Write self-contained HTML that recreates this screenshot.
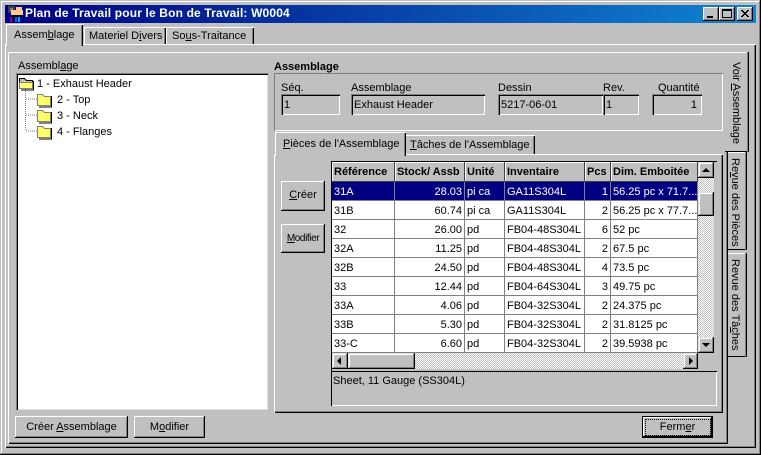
<!DOCTYPE html>
<html lang="fr"><head><meta charset="utf-8"><title>Plan de Travail</title>
<style>
html,body{margin:0;padding:0;background:#c0c0c0}
#w{position:relative;width:761px;height:455px;overflow:hidden;background:#c0c0c0;font:11px/13px "Liberation Sans",sans-serif;color:#000}
#w div{position:absolute;box-sizing:border-box;white-space:nowrap}
.btn{background:#c0c0c0;box-shadow:inset -1px -1px #000,inset 1px 1px #fff,inset -2px -2px #808080;text-align:center}
.sb{background:#c0c0c0;box-shadow:inset -1px -1px #000,inset 1px 1px #dfdfdf,inset -2px -2px #808080,inset 2px 2px #fff}
.f{background:#c0c0c0;box-shadow:inset 1px 1px #808080,inset 2px 2px #000,inset -1px -1px #fff;padding:4px 0 0 3px;height:21px;line-height:14px}
.chk{background:repeating-conic-gradient(#fff 0 25%,#c0c0c0 0 50%) 0 0/2px 2px}
.rot{transform:rotate(90deg);transform-origin:0 0}
table{position:absolute;left:332px;top:162px;border-collapse:separate;border-spacing:0;table-layout:fixed;width:366px}
td,th{box-sizing:border-box;height:19px;padding:4px 0 0 2px;vertical-align:top;border-right:1px solid #808080;border-bottom:1px solid #808080;background:#fff;font-size:11px;line-height:13px;overflow:hidden;white-space:nowrap;text-align:left;font-weight:normal}
th{height:20px;background:#c0c0c0;font-weight:bold;border:0;box-shadow:inset -1px -1px #404040,inset 1px 1px #fff}
td.r{text-align:right;padding:4px 2px 0 0}
tr.s td{background:#000080;color:#fff}
</style></head><body>
<div id="w">
<!-- window frame -->
<div style="left:0;top:0;width:761px;height:455px;box-shadow:inset -1px -1px #000,inset 1px 1px #c0c0c0,inset -2px -2px #808080,inset 2px 2px #fff"></div>
<!-- title bar -->
<div style="left:5px;top:5px;width:751px;height:18px;background:linear-gradient(90deg,#000080,#1084d0)"></div>
<svg style="position:absolute;left:7px;top:5px" width="17" height="18" viewBox="0 0 17 18" shape-rendering="crispEdges">
<rect x="1" y="1" width="7" height="7" fill="#404040"/><rect x="3" y="3" width="3" height="3" fill="#808080"/>
<rect x="4" y="5" width="12" height="6" fill="#ffc890"/><rect x="9" y="2" width="6" height="4" fill="#ffc890"/>
<rect x="4" y="10" width="12" height="2" fill="#000"/>
<rect x="3" y="12" width="2" height="5" fill="#8000c0"/><rect x="6" y="12" width="1" height="5" fill="#000"/><rect x="8" y="12" width="2" height="5" fill="#0060ff"/><rect x="11" y="12" width="2" height="5" fill="#00a0ff"/><rect x="14" y="12" width="1" height="5" fill="#0000c0"/>
</svg>
<div style="left:25px;top:6px;color:#fff;font:bold 12px/14px 'Liberation Sans',sans-serif;letter-spacing:.15px">Plan de Travail pour le Bon de Travail: W0004</div>
<div class="btn" style="left:703px;top:7px;width:16px;height:14px"><div style="left:4px;top:9px;width:6px;height:2px;background:#000"></div></div>
<div class="btn" style="left:719px;top:7px;width:16px;height:14px"><div style="left:3px;top:2px;width:10px;height:9px;border:1px solid #000;border-top-width:2px"></div></div>
<div class="btn" style="left:737px;top:7px;width:16px;height:14px">
<svg style="position:absolute;left:4px;top:3px" width="8" height="7" shape-rendering="crispEdges"><path d="M0 0h2v1h-2zM6 0h2v1h-2zM1 1h2v1h-2zM5 1h2v1h-2zM2 2h4v1h-4zM3 3h2v1h-2zM2 4h4v1h-4zM1 5h2v1h-2zM5 5h2v1h-2zM0 6h2v1h-2zM6 6h2v1h-2z" fill="#000"/></svg></div>

<!-- main page -->
<div style="left:5px;top:44px;width:751px;height:404px;box-shadow:inset 1px 1px #fff,inset -1px -1px #000,inset -2px -2px #808080"></div>
<!-- main tabs -->
<div style="left:84px;top:27px;width:82px;height:17px;background:#c0c0c0;box-shadow:inset 1px 1px #fff,inset -1px 0 #000,inset -2px 0 #808080;padding:2px 0 0 5px;line-height:15px">Materiel D<u>i</u>vers</div>
<div style="left:166px;top:27px;width:88px;height:17px;background:#c0c0c0;box-shadow:inset 1px 1px #fff,inset -1px 0 #000,inset -2px 0 #808080;padding:2px 0 0 6px;line-height:15px">So<u>u</u>s-Traitance</div>
<div style="left:6px;top:24px;width:77px;height:22px;background:#c0c0c0;box-shadow:inset 1px 1px #fff,inset -1px 0 #000,inset -2px 0 #808080;padding:5px 0 0 8px">Assem<u>b</u>lage</div>

<!-- second page -->
<div style="left:8px;top:52px;width:720px;height:392px;box-shadow:inset 1px 1px #fff,inset -1px -1px #000,inset -2px -2px #808080"></div>

<!-- side tabs -->
<div style="left:728px;top:152px;width:19px;height:98px;background:#c0c0c0;box-shadow:inset -1px 0 #000,inset -2px 0 #808080,inset 0 1px #fff,inset 0 -1px #000"></div>
<div class="rot" style="left:741px;top:158px">Re<u>v</u>ue des Pièces</div>
<div style="left:728px;top:253px;width:19px;height:104px;background:#c0c0c0;box-shadow:inset -1px 0 #000,inset -2px 0 #808080,inset 0 1px #fff,inset 0 -1px #000"></div>
<div class="rot" style="left:741px;top:259px">Revue des Tâ<u>c</u>hes</div>
<div style="left:725px;top:52px;width:24px;height:100px;background:#c0c0c0;box-shadow:inset -1px 0 #000,inset -2px 0 #808080,inset 0 1px #fff,inset 0 -1px #000"></div>
<div class="rot" style="left:742px;top:62px"><span>Voir </span><u>A</u>ssemblage</div>

<!-- tree -->
<div style="left:18px;top:60px;">Assembl<u>a</u>ge</div>
<div style="left:16px;top:73px;width:252px;height:337px;background:#fff;box-shadow:inset 1px 1px #808080,inset 2px 2px #000,inset -1px -1px #dfdfdf"></div>
<svg style="position:absolute;left:18px;top:76px" width="36" height="66" shape-rendering="crispEdges">
<path d="M7.5 13v42M8 23h11M8 39h11M8 55h11" stroke="#808080" stroke-dasharray="1 1" fill="none"/>
<path d="M1.5 2.5h5l2 2h6v8H1.5z" fill="#c0c0c0" stroke="#000"/>
<path d="M1.5 6.5h13v6H1.5z" fill="#ffff66" stroke="#808080"/>
<path d="M15.5 5v9H3" stroke="#000" fill="none"/>
<path d="M19.5 18.5h5l2 2h6v9H19.5z" fill="#ffff66" stroke="#808080"/><path d="M33.5 20v11H21" stroke="#000" fill="none"/>
<path d="M19.5 34.5h5l2 2h6v9H19.5z" fill="#ffff66" stroke="#808080"/><path d="M33.5 36v11H21" stroke="#000" fill="none"/>
<path d="M19.5 50.5h5l2 2h6v9H19.5z" fill="#ffff66" stroke="#808080"/><path d="M33.5 52v11H21" stroke="#000" fill="none"/>
</svg>
<div style="left:37px;top:78px">1 - Exhaust Header</div>
<div style="left:57px;top:94px">2 - Top</div>
<div style="left:57px;top:110px">3 - Neck</div>
<div style="left:57px;top:126px">4 - Flanges</div>

<!-- bottom buttons -->
<div class="btn" style="left:15px;top:416px;width:113px;height:22px;padding-top:5px">Créer <u>A</u>ssemblage</div>
<div class="btn" style="left:134px;top:416px;width:71px;height:22px;padding-top:5px">M<u>o</u>difier</div>
<div style="left:642px;top:416px;width:71px;height:22px;background:#c0c0c0;box-shadow:inset 0 0 0 1px #000,inset -2px -2px #000,inset 2px 2px #fff,inset -3px -3px #808080;padding-top:5px;text-align:center">Ferm<u>e</u>r</div>
<div style="left:645px;top:419px;width:66px;height:17px;border:1px dotted #000"></div>

<!-- assemblage section -->
<div style="left:274px;top:61px;font-weight:bold">Assemblage</div>
<div style="left:274px;top:73px;width:449px;height:58px;box-shadow:inset 1px 1px #808080,inset -1px -1px #fff"></div>
<div style="left:281px;top:82px">Séq.</div>
<div style="left:351px;top:82px">Assemblage</div>
<div style="left:498px;top:82px">Dessin</div>
<div style="left:603px;top:82px">Rev.</div>
<div style="left:658px;top:82px">Quantité</div>
<div class="f" style="left:281px;top:94px;width:59px">1</div>
<div class="f" style="left:351px;top:94px;width:134px">Exhaust Header</div>
<div class="f" style="left:498px;top:94px;width:105px">5217-06-01</div>
<div class="f" style="left:603px;top:94px;width:36px">1</div>
<div class="f" style="left:652px;top:94px;width:50px;text-align:right;padding-right:5px">1</div>

<!-- inner tab page -->
<div style="left:274px;top:154px;width:449px;height:259px;box-shadow:inset 1px 1px #fff,inset -1px -1px #000,inset -2px -2px #808080"></div>
<div style="left:405px;top:135px;width:130px;height:19px;background:#c0c0c0;box-shadow:inset 0 1px #fff,inset -1px 0 #000,inset -2px 0 #808080;padding:4px 0 0 5px"><u>T</u>âches de l'Assemblage</div>
<div style="left:275px;top:132px;width:131px;height:24px;background:#c0c0c0;box-shadow:inset 1px 1px #fff,inset -1px 0 #000,inset -2px 0 #808080;padding:6px 0 0 8px"><u>P</u>ièces de l'Assemblage</div>

<div class="btn" style="left:281px;top:181px;width:44px;height:30px;padding-top:8px"><u>C</u>réer</div>
<div class="btn" style="left:281px;top:224px;width:44px;height:29px;padding-top:8px;font-size:10px;letter-spacing:-.4px"><u>M</u>odifier</div>

<!-- grid -->
<div style="left:331px;top:161px;width:386px;height:210px;background:#c0c0c0;box-shadow:inset 1px 1px #000"></div>
<table>
<colgroup><col style="width:63px"><col style="width:70px"><col style="width:40px"><col style="width:80px"><col style="width:26px"><col style="width:87px"></colgroup>
<tr><th>Référence</th><th>Stock/ Assb</th><th>Unité</th><th>Inventaire</th><th>Pcs</th><th>Dim. Emboitée</th></tr>
<tr class="s"><td>31A</td><td class="r">28.03</td><td>pi ca</td><td>GA11S304L</td><td class="r">1</td><td>56.25 pc x 71.7...</td></tr>
<tr><td>31B</td><td class="r">60.74</td><td>pi ca</td><td>GA11S304L</td><td class="r">2</td><td>56.25 pc x 77.7...</td></tr>
<tr><td>32</td><td class="r">26.00</td><td>pd</td><td>FB04-48S304L</td><td class="r">6</td><td>52 pc</td></tr>
<tr><td>32A</td><td class="r">11.25</td><td>pd</td><td>FB04-48S304L</td><td class="r">2</td><td>67.5 pc</td></tr>
<tr><td>32B</td><td class="r">24.50</td><td>pd</td><td>FB04-48S304L</td><td class="r">4</td><td>73.5 pc</td></tr>
<tr><td>33</td><td class="r">12.44</td><td>pd</td><td>FB04-64S304L</td><td class="r">3</td><td>49.75 pc</td></tr>
<tr><td>33A</td><td class="r">4.06</td><td>pd</td><td>FB04-32S304L</td><td class="r">2</td><td>24.375 pc</td></tr>
<tr><td>33B</td><td class="r">5.30</td><td>pd</td><td>FB04-32S304L</td><td class="r">2</td><td>31.8125 pc</td></tr>
<tr><td>33-C</td><td class="r">6.60</td><td>pd</td><td>FB04-32S304L</td><td class="r">2</td><td>39.5938 pc</td></tr>
</table>
<!-- vertical scrollbar -->
<div class="chk" style="left:698px;top:162px;width:16px;height:191px"></div>
<div class="sb" style="left:698px;top:162px;width:16px;height:16px"><div style="left:4px;top:6px;width:0;height:0;border:4px solid transparent;border-top:0;border-bottom:4px solid #000"></div></div>
<div class="sb" style="left:698px;top:192px;width:16px;height:24px"></div>
<div class="sb" style="left:698px;top:337px;width:16px;height:16px"><div style="left:4px;top:6px;width:0;height:0;border:4px solid transparent;border-bottom:0;border-top:4px solid #000"></div></div>
<!-- horizontal scrollbar -->
<div class="chk" style="left:332px;top:353px;width:366px;height:16px"></div>
<div class="sb" style="left:332px;top:353px;width:16px;height:16px"><div style="left:5px;top:4px;width:0;height:0;border:4px solid transparent;border-left:0;border-right:4px solid #000"></div></div>
<div class="sb" style="left:348px;top:353px;width:67px;height:16px"></div>
<div class="sb" style="left:683px;top:353px;width:15px;height:16px"><div style="left:6px;top:4px;width:0;height:0;border:4px solid transparent;border-right:0;border-left:4px solid #000"></div></div>
<!-- description -->
<div style="left:331px;top:371px;width:386px;height:35px;background:#c0c0c0;box-shadow:inset 1px 1px #000,inset -1px -1px #fff;padding:4px 0 0 2px">Sheet, 11 Gauge (SS304L)</div>
</div>
</body></html>
